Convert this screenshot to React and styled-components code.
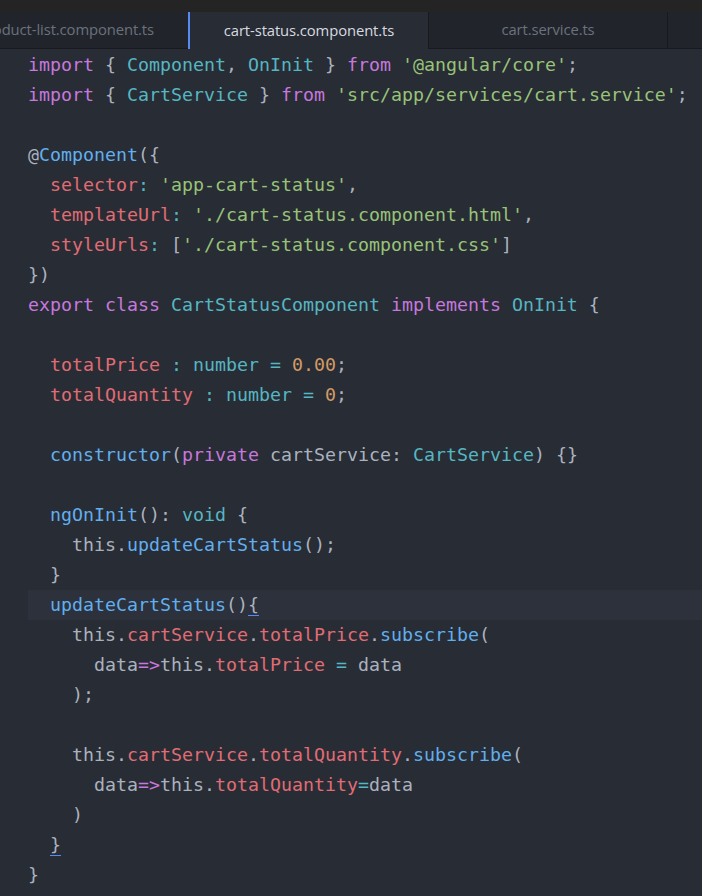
import React from "react";
import styled, { createGlobalStyle } from "styled-components";

// One Dark palette
const colors = {
  kw: "#c678dd",
  type: "#56b6c2",
  fn: "#61afef",
  prop: "#e06c75",
  str: "#98c379",
  num: "#d19a66",
  text: "#abb2bf",
};

const GlobalStyle = createGlobalStyle`
  html, body {
    margin: 0;
    padding: 0;
    background: #282c34;
  }
`;

const Window = styled.div`
  display: flex;
  flex-direction: column;
  width: 702px;
  min-height: 896px;
  background: #282c34;
  overflow: hidden;
`;

const TopStrip = styled.div`
  height: 12px;
  background: #242424;
`;

const TabBar = styled.div`
  display: flex;
  height: 37px;
  background: #21252b;
  overflow: hidden;
`;

const Tab = styled.div`
  flex: 0 0 ${(p) => p.width}px;
  display: flex;
  align-items: center;
  justify-content: ${(p) => (p.clipped ? "flex-end" : "center")};
  padding-right: ${(p) => (p.clipped ? 34 : 0)}px;
  box-sizing: border-box;
  overflow: hidden;
  white-space: nowrap;
  font-family: "Open Sans", "Noto Sans", sans-serif;
  font-size: 14.8px;
  letter-spacing: -0.1px;
  padding-bottom: 2px;
  color: ${(p) => (p.active ? "#d7dae0" : "#6b717d")};
  background: ${(p) => (p.active ? "#282c34" : "#21252b")};
  border-left: ${(p) => (p.active ? "2px solid #568af2" : "1px solid #181a1f")};
  border-bottom: ${(p) => (p.active ? "none" : "1px solid #181a1f")};
  ${(p) => p.first && "border-left: none;"}
`;

const Code = styled.div`
  padding: 1px 0 0 0;
  font-family: "DejaVu Sans Mono", "Liberation Mono", monospace;
  font-size: 18.27px;
  line-height: 30px;
  color: ${colors.text};
`;

const Line = styled.div`
  height: 30px;
  margin-left: 28px;
  white-space: pre;
  background: ${(p) => (p.current ? "#2c313c" : "transparent")};
`;

const Tok = styled.span`
  color: ${(p) => colors[p.kind] || colors.text};
`;

const Match = styled.span`
  border-bottom: 1px solid #528bff;
`;

// each line: [ [kind, text], ... ]
const code = [
  [["kw", "import"], ["", " { "], ["type", "Component"], ["", ", "], ["type", "OnInit"], ["", " } "], ["kw", "from"], ["", " "], ["str", "'@angular/core'"], ["", ";"]],
  [["kw", "import"], ["", " { "], ["type", "CartService"], ["", " } "], ["kw", "from"], ["", " "], ["str", "'src/app/services/cart.service'"], ["", ";"]],
  [],
  [["", "@"], ["fn", "Component"], ["", "({"]],
  [["", "  "], ["prop", "selector"], ["type", ":"], ["", " "], ["str", "'app-cart-status'"], ["", ","]],
  [["", "  "], ["prop", "templateUrl"], ["type", ":"], ["", " "], ["str", "'./cart-status.component.html'"], ["", ","]],
  [["", "  "], ["prop", "styleUrls"], ["type", ":"], ["", " ["], ["str", "'./cart-status.component.css'"], ["", "]"]],
  [["", "})"]],
  [["kw", "export"], ["", " "], ["kw", "class"], ["", " "], ["type", "CartStatusComponent"], ["", " "], ["kw", "implements"], ["", " "], ["type", "OnInit"], ["", " {"]],
  [],
  [["", "  "], ["prop", "totalPrice"], ["", " "], ["type", ": number ="], ["", " "], ["num", "0.00"], ["", ";"]],
  [["", "  "], ["prop", "totalQuantity"], ["", " "], ["type", ": number ="], ["", " "], ["num", "0"], ["", ";"]],
  [],
  [["", "  "], ["fn", "constructor"], ["", "("], ["kw", "private"], ["", " cartService: "], ["type", "CartService"], ["", ") {}"]],
  [],
  [["", "  "], ["fn", "ngOnInit"], ["", "(): "], ["type", "void"], ["", " {"]],
  [["", "    this."], ["fn", "updateCartStatus"], ["", "();"]],
  [["", "  }"]],
  [["", "  "], ["fn", "updateCartStatus"], ["", "()"], ["match", "{"]],
  [["", "    this."], ["prop", "cartService"], ["", "."], ["prop", "totalPrice"], ["", "."], ["fn", "subscribe"], ["", "("]],
  [["", "      data"], ["kw", "=>"], ["", "this."], ["prop", "totalPrice"], ["", " "], ["type", "="], ["", " data"]],
  [["", "    );"]],
  [],
  [["", "    this."], ["prop", "cartService"], ["", "."], ["prop", "totalQuantity"], ["", "."], ["fn", "subscribe"], ["", "("]],
  [["", "      data"], ["kw", "=>"], ["", "this."], ["prop", "totalQuantity"], ["type", "="], ["", "data"]],
  [["", "    )"]],
  [["", "  "], ["match", "}"]],
  [["", "}"]],
];

const CURRENT_LINE = 18;

const tabs = [
  { name: "product-list.component.ts", width: 188, first: true, clipped: true },
  { name: "cart-status.component.ts", width: 240, active: true },
  { name: "cart.service.ts", width: 239 },
  { name: "", width: 60 },
];

export default function App() {
  return (
    <>
      <GlobalStyle />
      <Window>
        <TopStrip />
        <TabBar>
          {tabs.map((t, i) => (
            <Tab key={i} width={t.width} active={t.active} first={t.first} clipped={t.clipped}>
              {t.name}
            </Tab>
          ))}
        </TabBar>
        <Code>
          {code.map((line, i) => (
            <Line key={i} current={i === CURRENT_LINE}>
              {line.length === 0
                ? " "
                : line.map(([kind, text], j) =>
                    kind === "match" ? (
                      <Match key={j}>{text}</Match>
                    ) : (
                      <Tok key={j} kind={kind}>
                        {text}
                      </Tok>
                    )
                  )}
            </Line>
          ))}
        </Code>
      </Window>
    </>
  );
}
